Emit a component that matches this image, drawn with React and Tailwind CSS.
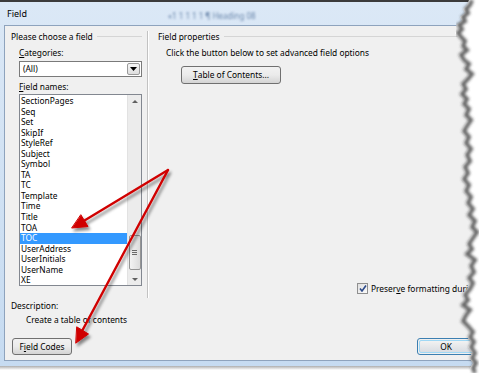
import React from 'react'

const fieldNames = [
  'SectionPages', 'Seq', 'Set', 'SkipIf', 'StyleRef', 'Subject', 'Symbol', 'TA', 'TC',
  'Template', 'Time', 'Title', 'TOA', 'TOC', 'UserAddress', 'UserInitials', 'UserName', 'XE',
]

const edge = [
  [469, 0], [467, 5], [463, 9], [465, 13], [460, 17], [462, 21], [456, 25], [459, 29], [455, 33],
  [458, 37], [462, 41], [460, 46], [464, 50], [458, 55], [461, 60], [466, 64], [463, 69], [469, 74],
  [465, 79], [460, 84], [463, 89], [459, 94], [464, 99], [461, 104], [466, 109], [463, 115],
  [468, 120], [464, 126], [461, 131], [466, 137], [463, 143], [468, 149], [464, 155], [467, 161],
  [462, 167], [465, 173], [461, 179], [466, 185], [463, 191], [468, 197], [465, 203], [470, 209],
  [466, 215], [472, 221], [469, 227], [474, 232], [470, 238], [466, 244], [469, 249], [464, 254],
  [472, 260], [468, 266], [471, 272], [466, 278], [470, 283], [467, 289], [462, 295], [465, 300],
  [460, 305], [467, 310], [463, 315], [460, 321], [465, 326], [470, 332], [467, 337], [471, 342],
  [468, 347], [472, 353], [469, 358], [473, 363], [470, 368], [472, 373],
]

function TornEdge() {
  const pts = edge.map(p => p.join(',')).join(' ')
  const white = pts + ' 480,373 480,0'
  const shadow = edge.map(([x, y]) => `${x + 3},${y}`).join(' ')
  return (
    <svg className="absolute inset-0 pointer-events-none" width="480" height="373">
      <defs>
        <filter id="tb" x="-10%" y="-10%" width="120%" height="120%">
          <feGaussianBlur stdDeviation="1.4" />
        </filter>
      </defs>
      <polygon points={white} fill="#ffffff" />
      <polyline points={shadow} fill="none" stroke="#4a4a4a" strokeWidth="4" filter="url(#tb)" opacity="0.85" />
    </svg>
  )
}

function Arrows() {
  return (
    <svg className="absolute inset-0 pointer-events-none" width="480" height="373">
      <defs>
        <filter id="ds" x="-20%" y="-20%" width="140%" height="140%">
          <feDropShadow dx="2" dy="3" stdDeviation="1.6" floodColor="#000" floodOpacity="0.45" />
        </filter>
      </defs>
      <g filter="url(#ds)" fill="#d00000" stroke="#d00000" strokeLinejoin="round" strokeLinecap="round">
        <line x1="168" y1="170" x2="82" y2="222" strokeWidth="2.4" />
        <polygon points="72,228 88,226.5 81,215" strokeWidth="1" />
        <line x1="168" y1="170" x2="81" y2="333" strokeWidth="2.4" />
        <polygon points="76,343 88.5,334 77,327" strokeWidth="1" />
      </g>
    </svg>
  )
}

function Button({ children, className = '' }) {
  return (
    <div className={`h-[17px] rounded-[3px] border border-[#707070] bg-gradient-to-b from-[#f2f2f2] via-[#ebebeb] to-[#d4d4d4] flex items-center justify-center text-[#000] ${className}`}>
      {children}
    </div>
  )
}

export default function App() {
  return (
    <div className="relative w-[480px] h-[373px] bg-white overflow-hidden text-[8.4px] leading-[10px] text-black" style={{ fontFamily: '"Noto Sans", "Liberation Sans", sans-serif' }}>
      <div className="h-[2px] w-[470px] bg-[#3b3b3b]" />
      <div className="w-[474px] h-[364px] flex flex-col bg-gradient-to-b from-[#dbe8f6] to-[#c6dbf1]">
        {/* title bar */}
        <div className="relative h-[23px] flex items-center pl-[7px] text-[9px]">
          <span>Field</span>
          <span className="absolute left-[168px] top-[9px] text-[8px] text-[#4d6d98] blur-[1.2px] opacity-80">«1 1 1 1 1 ¶ Heading 08</span>
        </div>
        <div className="flex-1 flex ml-[4px] mb-[5px] border-l border-t border-b border-[#8ea3bd] bg-[#f0f0f0]">
          <div className="flex-1 flex flex-col">
            {/* top area */}
            <div className="h-[272px] flex">
              {/* left column */}
              <div className="w-[142px] flex flex-col pt-[5px]">
                <div className="flex items-center pl-[6px] pr-[5px] h-[11px]">
                  <span>Please choose a field</span>
                  <div className="flex-1 ml-[4px] border-t border-[#d5d5d5]" />
                </div>
                <div className="pl-[14px] pr-[5px] flex flex-col">
                  <div className="mt-[6px] h-[10px]"><span className="underline">C</span>ategories:</div>
                  <div className="mt-[3px] h-[16px] flex border border-[#7a7a7a] bg-white">
                    <div className="flex-1 pl-[3px] flex items-center">(All)</div>
                    <div className="w-[13px] m-[1px] border border-[#9a9a9a] rounded-[2px] bg-gradient-to-b from-[#f6f6f6] to-[#dedede] flex items-center justify-center">
                      <svg width="7" height="4" viewBox="0 0 7 4"><polygon points="0,0 7,0 3.5,4" fill="#000" /></svg>
                    </div>
                  </div>
                  <div className="mt-[5px] h-[10px]"><span className="underline">F</span>ield names:</div>
                  <div className="mt-[2px] h-[192px] flex border border-[#828790] bg-white">
                    <div className="flex-1 pt-[1px] flex flex-col">
                      {fieldNames.map(name => (
                        <div
                          key={name}
                          className={`h-[10.55px] leading-[10.55px] pl-[1px] ${name === 'TOC' ? 'bg-[#3399ff] text-white' : ''}`}
                        >
                          {name}
                        </div>
                      ))}
                    </div>
                    <div className="w-[14px] bg-[#ececec] border-l border-[#e2e2e2] flex flex-col items-center">
                      <div className="h-[12px] flex items-center justify-center">
                        <svg width="6" height="3" viewBox="0 0 6 3"><polygon points="0,3 6,3 3,0" fill="#606060" /></svg>
                      </div>
                      <div className="flex-1" />
                      <div className="w-[12px] h-[35px] mb-[3px] rounded-[2px] border border-[#959595] bg-gradient-to-r from-[#f3f3f3] to-[#dcdcdc] flex items-center justify-center">
                        <div className="flex flex-col gap-[1px]">
                          <div className="w-[5px] h-px bg-[#6a6a6a]" />
                          <div className="w-[5px] h-px bg-[#6a6a6a]" />
                          <div className="w-[5px] h-px bg-[#6a6a6a]" />
                        </div>
                      </div>
                      <div className="h-[12px] flex items-center justify-center">
                        <svg width="6" height="3" viewBox="0 0 6 3"><polygon points="0,0 6,0 3,3" fill="#606060" /></svg>
                      </div>
                    </div>
                  </div>
                </div>
              </div>
              {/* separator */}
              <div className="mt-[5px] w-[3px] flex">
                <div className="w-px bg-[#c2c2c2]" />
                <div className="w-px bg-white" />
              </div>
              {/* right column */}
              <div className="flex-1 flex flex-col pt-[5px]">
                <div className="flex items-center pl-[8px] h-[11px]">
                  <span>Field properties</span>
                  <div className="flex-1 ml-[5px] border-t border-[#d5d5d5]" />
                </div>
                <div className="mt-[6px] pl-[16px] h-[10px]">Click the button below to set advanced field options</div>
                <div className="mt-[8px] pl-[31px]">
                  <Button className="w-[100px] h-[18px]"><span className="underline">T</span>able of Contents...</Button>
                </div>
                <div className="mt-auto mb-[4px] pl-[207px] flex items-center">
                  <div className="w-[11px] h-[11px] border border-[#8f8f8f] bg-gradient-to-br from-[#e0e0e0] to-[#fbfbfb] flex items-center justify-center">
                    <svg width="8" height="7" viewBox="0 0 8 7"><polyline points="1,3.5 3,6 7,0.5" fill="none" stroke="#2d4a8a" strokeWidth="1.6" /></svg>
                  </div>
                  <span className="ml-[3px] whitespace-nowrap">Preser<span className="underline">v</span>e formatting during updates</span>
                </div>
              </div>
            </div>
            {/* bottom area */}
            <div className="flex-1 flex flex-col pt-[3px]">
              <div className="pl-[6px] h-[10px]">Description:</div>
              <div className="pl-[21px] mt-[4px] h-[10px]">Create a table of contents</div>
              <div className="mt-[13px] flex pl-[7px]">
                <Button className="w-[60px]">F<span className="underline">i</span>eld Codes</Button>
                <div className="ml-[345px] w-[58px] h-[17px] rounded-[3px] border border-[#3c7fb1] p-px">
                  <div className="w-full h-full rounded-[2px] border border-[#9fd8f5] bg-gradient-to-b from-[#f2f2f2] to-[#d9dde2] flex items-center justify-center">OK</div>
                </div>
              </div>
            </div>
          </div>
        </div>
      </div>
      <div className="h-[4px] w-[474px] bg-gradient-to-b from-[#8a8a8a] to-transparent opacity-70" />
      <Arrows />
      <TornEdge />
    </div>
  )
}
